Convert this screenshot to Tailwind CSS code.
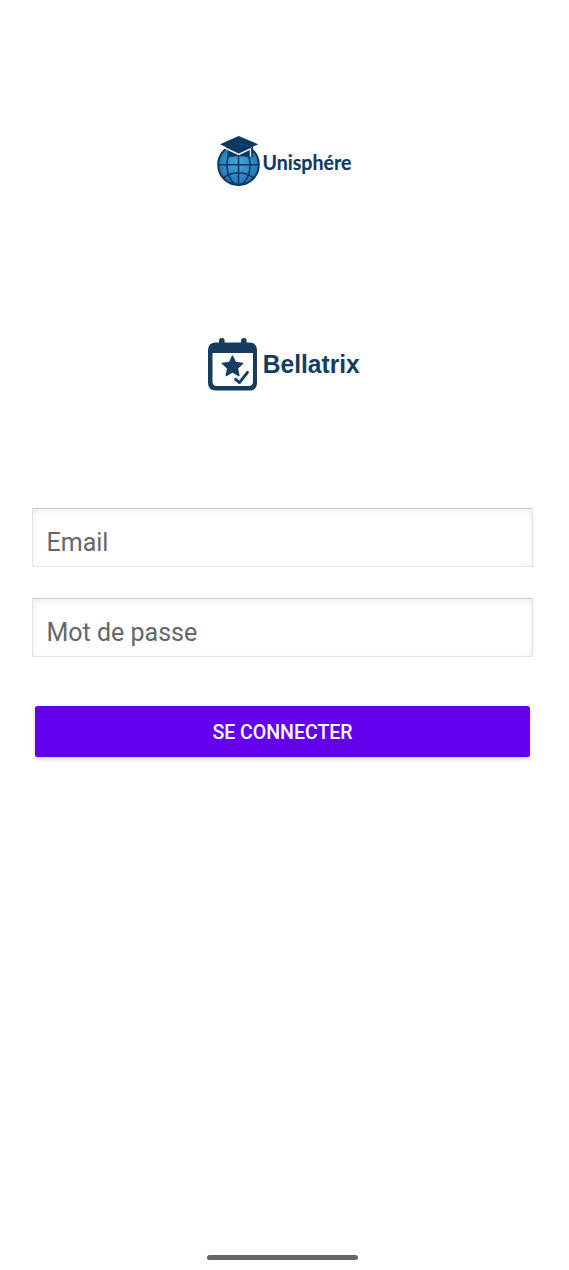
<!DOCTYPE html>
<html lang="fr">
<head>
<meta charset="utf-8">
<meta name="viewport" content="width=device-width, initial-scale=1">
<title>Connexion</title>
<script src="https://cdn.jsdelivr.net/npm/@tailwindcss/browser@4"></script>
</head>
<body class="bg-white">
<main class="flex h-[1270px] w-[569px] flex-col overflow-hidden bg-white pt-[130px] font-['Roboto',sans-serif]">
  <svg class="ml-[210px] h-[60px] w-[180px] shrink-0" viewBox="0 0 180 60" role="img" aria-label="Unisphére">
    <defs>
      <radialGradient id="globe" cx=".5" cy=".45" r=".55"><stop offset="0" stop-color="#48a5dc"/><stop offset="1" stop-color="#2274b2"/></radialGradient>
    </defs>
    <circle cx="28.5" cy="34.7" r="20.3" fill="url(#globe)" stroke="#0c3963" stroke-width="2"/>
    <g fill="none" stroke="#0c3963" stroke-width="1.6">
      <path d="M28.5 15v40M8 34.7h41M13 48Q28.500 37.500 44 48"/>
      <ellipse cx="28.500" cy="34.700" rx="11.500" ry="20"/>
    </g>
    <path d="M17.500 18.500 28.500 23.500 40 18.500V27.500Q28.500 25 17.500 27.500Z" fill="#0c3963"/>
    <path d="M14 17.500 28.700 24.500 40.500 18.800V26.500" fill="none" stroke="#fff" stroke-width="1.400"/>
    <path d="M10 14.300 28.700 6 48.200 14.300 28.700 23.200Z" fill="#0c3963"/>
    <path d="M28 13.500 42.200 17V27.500" fill="none" stroke="#0c3963" stroke-width="1.700"/>
    <path d="M29 13.700 38 15.800" fill="none" stroke="#174f7c" stroke-width="1"/>
    <text x="52.500" y="40.400" textLength="89" lengthAdjust="spacingAndGlyphs" class="fill-[#0d3960] stroke-[#0d3960] [stroke-width:0.15px] font-['Lato',sans-serif] text-[21px] font-bold">Unisphére</text>
  </svg>
  <svg class="mt-[140px] ml-[200px] h-[65px] w-[190px] shrink-0" viewBox="0 0 190 65" role="img" aria-label="Bellatrix">
    <g fill="#143d60">
      <path fill-rule="evenodd" d="M16 12.500H49Q57 12.500 57 20.500V52.500Q57 60.500 49 60.500H16Q8 60.500 8 52.500V20.500Q8 12.500 16 12.500ZM12.500 23V51.500Q12.500 56 17 56H48.500Q53 56 53 51.500V23Z"/>
      <rect x="19" y="8" width="5.600" height="8" rx="2.500"/>
      <rect x="41" y="8" width="5.600" height="8" rx="2.500"/>
      <path d="M32.500 26 35.500 32.500 42.700 33.300 37.500 38.300 38.900 45.600 32.500 42 26.200 45.600 27.600 38.300 22.300 33.300 29.500 32.500Z" stroke="#143d60" stroke-width="1.300" stroke-linejoin="round"/>
    </g>
    <path d="M35.500 49.300 39.500 52.600 47.500 42.300" fill="none" stroke="#143d60" stroke-width="2.800" stroke-linecap="round" stroke-linejoin="round"/>
    <text x="62.800" y="43.200" textLength="97" lengthAdjust="spacingAndGlyphs" class="fill-[#143d60] font-['Liberation_Sans',Arial,sans-serif] text-[26.700px] font-bold">Bellatrix</text>
  </svg>
  <form class="mt-[113px] ml-8 flex w-[501px] flex-col">
    <div class="flex h-[59px] items-center border border-[#e2e2e2] border-t-[#cbcbcb] pt-[10px] pl-[13.500px] text-[25px] text-[#666] shadow-[inset_0_2px_6px_#00000014]"><span>Email</span></div>
    <div class="mt-[31px] flex h-[59px] items-center border border-[#e2e2e2] border-t-[#cbcbcb] pt-[10px] pl-[13.500px] text-[25px] text-[#666] shadow-[inset_0_2px_6px_#00000014]"><span>Mot de passe</span></div>
    <button type="button" class="mx-[3px] mt-[49px] h-[51px] rounded-[2.500px] bg-[#6200ee] pt-[2px] text-[19.500px] font-medium text-white shadow-[0_2px_4px_#00000030]">SE CONNECTER</button>
  </form>
  <div class="mt-auto mb-[10px] ml-[207px] h-[5px] w-[151px] shrink-0 rounded-full bg-[#666]"></div>
</main>
</body>
</html>
